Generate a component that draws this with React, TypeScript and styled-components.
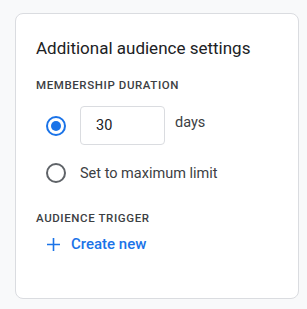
import React, { useState } from "react";
import styled, { createGlobalStyle } from "styled-components";

const GlobalStyle = createGlobalStyle`
  html, body {
    margin: 0;
    padding: 0;
    background: #f8f9fa;
    font-family: Roboto, "Noto Sans", Arial, sans-serif;
    color: #202124;
  }
`;

const Page = styled.div`
  padding: 13px 8px 10px 15px;
`;

const Card = styled.section`
  box-sizing: border-box;
  width: 284px;
  height: 286px;
  background: #fff;
  border: 1px solid #dadce0;
  border-radius: 8px;
  padding: 23px 20px 0 20px;
  display: flex;
  flex-direction: column;
`;

const Title = styled.h2`
  margin: 0;
  font-size: 17px;
  font-weight: 400;
  line-height: 22px;
  color: #202124;
`;

const SectionLabel = styled.h3<{ top: number }>`
  margin: ${({ top }) => top}px 0 0;
  font-size: 11.5px;
  font-weight: 500;
  letter-spacing: 0.6px;
  line-height: 16px;
  color: #3c4043;
  text-transform: uppercase;
`;

const OptionRow = styled.label<{ top: number }>`
  display: flex;
  align-items: center;
  gap: 14px;
  margin-top: ${({ top }) => top}px;
  padding-left: 10px;
  font-size: 14.5px;
  color: #3c4043;
  cursor: pointer;
`;

const Radio = styled.span<{ checked?: boolean }>`
  box-sizing: border-box;
  width: 20px;
  height: 20px;
  border-radius: 50%;
  border: 2px solid ${({ checked }) => (checked ? "#1a73e8" : "#5f6368")};
  display: flex;
  align-items: center;
  justify-content: center;
  flex-shrink: 0;

  &::after {
    content: "";
    width: 10px;
    height: 10px;
    border-radius: 50%;
    background: #1a73e8;
    display: ${({ checked }) => (checked ? "block" : "none")};
  }
`;

const DaysInput = styled.input`
  box-sizing: border-box;
  width: 85px;
  height: 39px;
  border: 1px solid #dadce0;
  border-radius: 4px;
  padding: 0 15px;
  font-family: inherit;
  font-size: 14.5px;
  color: #202124;
  outline: none;
`;

const Suffix = styled.span`
  align-self: flex-start;
  margin-top: 8px;
  margin-left: -4px;
`;

const CreateButton = styled.button`
  display: flex;
  align-items: center;
  gap: 11px;
  margin-top: 9px;
  padding: 0 0 0 11px;
  border: none;
  background: none;
  font-family: inherit;
  font-size: 15px;
  font-weight: 500;
  color: #1a73e8;
  cursor: pointer;
  align-self: flex-start;
`;

export default function App() {
  const [limit, setLimit] = useState(false);
  const [days, setDays] = useState("30");

  return (
    <>
      <GlobalStyle />
      <Page>
        <Card>
          <Title>Additional audience settings</Title>
          <SectionLabel top={18}>Membership duration</SectionLabel>
          <OptionRow top={13} onClick={() => setLimit(false)}>
            <Radio checked={!limit} />
            <DaysInput value={days} onChange={(e) => setDays(e.target.value)} />
            <Suffix>days</Suffix>
          </OptionRow>
          <OptionRow top={18} onClick={() => setLimit(true)}>
            <Radio checked={limit} />
            <span>Set to maximum limit</span>
          </OptionRow>
          <SectionLabel top={27}>Audience trigger</SectionLabel>
          <CreateButton>
            <svg width="13" height="13" viewBox="0 0 13 13">
              <path d="M6.5 0v13M0 6.5h13" stroke="#1a73e8" strokeWidth="1.6" />
            </svg>
            Create new
          </CreateButton>
        </Card>
      </Page>
    </>
  );
}
